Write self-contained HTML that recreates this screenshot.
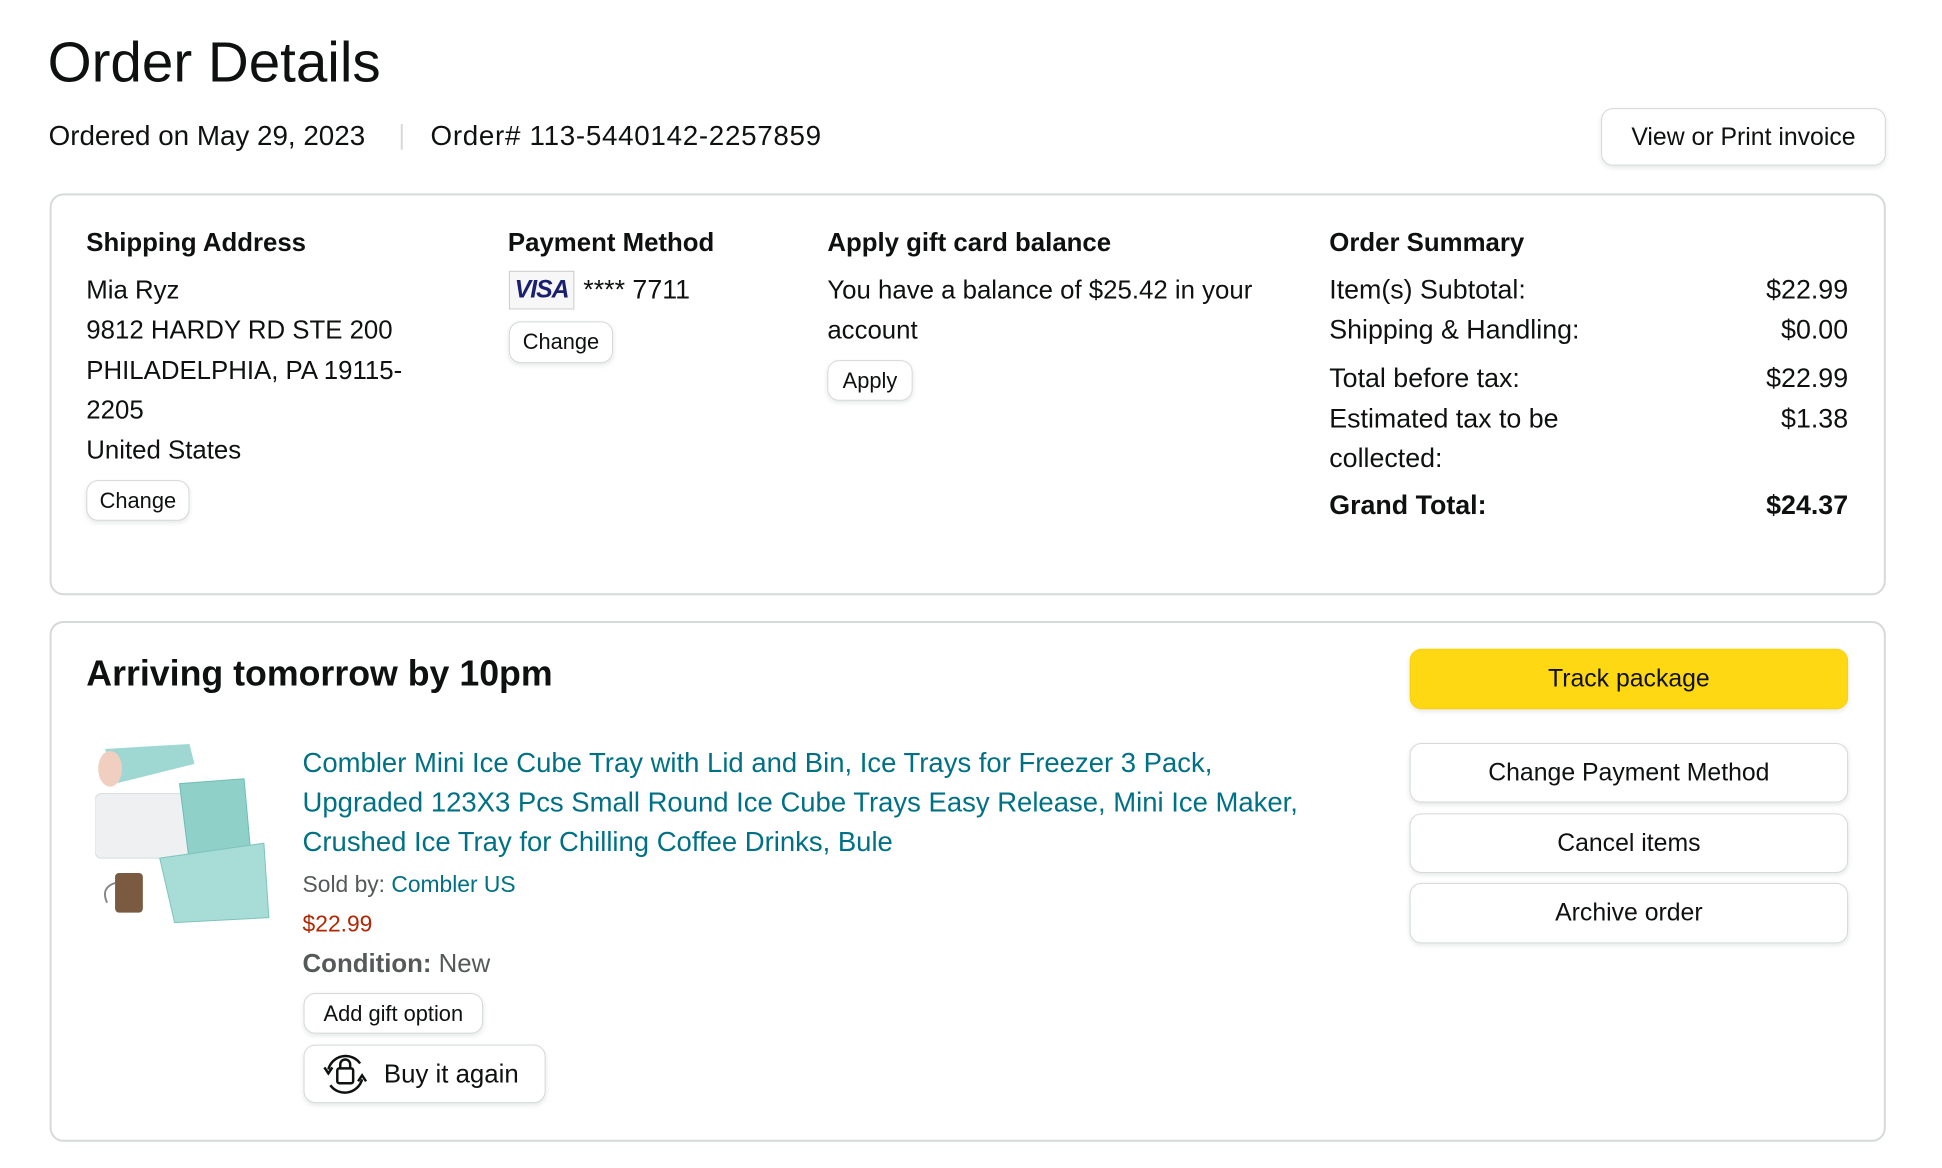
<!DOCTYPE html>
<html><head><meta charset="utf-8">
<style>
*{margin:0;padding:0;box-sizing:border-box}
body{width:1942px;height:1168px;background:#fff;font-family:"Liberation Sans",sans-serif;color:#0f1111;position:relative;overflow:hidden}
#w{position:absolute;left:0;top:0;width:1942px;height:1168px;transform:scale(0.992);transform-origin:0 0}
.a{position:absolute;white-space:nowrap}
.t{font-size:26px;line-height:40px}
.b{font-weight:bold}
.box{position:absolute;border:2px solid #d5d9d9;border-radius:14px}
.btn{position:absolute;border:1.5px solid #d5d9d9;border-radius:12px;background:#fff;box-shadow:0 2px 5px rgba(213,217,217,.6);display:flex;align-items:center;justify-content:center;font-size:22px;color:#0f1111}
.r{text-align:right;width:200px}
.link{color:#007185}
</style></head><body><div id="w">
<div class="a" style="left:48px;top:30px;font-size:57px;line-height:66px">Order Details</div>
<div class="a" style="left:49px;top:117px;font-size:28px;line-height:40px">Ordered on May 29, 2023</div>
<div class="a" style="left:404px;top:125px;width:2px;height:26px;background:#d5d9d9"></div>
<div class="a" style="left:434px;top:117px;font-size:28px;line-height:40px;letter-spacing:0.7px">Order# 113-5440142-2257859</div>
<div class="btn" style="left:1614px;top:109px;width:287px;height:58px;font-size:25px">View or Print invoice</div>

<div class="box" style="left:50px;top:195px;width:1851px;height:405px"></div>
<div class="a t b" style="left:87px;top:224px">Shipping Address</div>
<div class="a t" style="left:87px;top:272px">Mia Ryz</div>
<div class="a t" style="left:87px;top:312px">9812 HARDY RD STE 200</div>
<div class="a t" style="left:87px;top:353px">PHILADELPHIA, PA 19115-</div>
<div class="a t" style="left:87px;top:393px">2205</div>
<div class="a t" style="left:87px;top:433px">United States</div>
<div class="btn" style="left:87px;top:484px;width:104px;height:41px">Change</div>

<div class="a t b" style="left:512px;top:224px">Payment Method</div>
<div class="a" style="left:513px;top:273px;width:66px;height:39px;border:1px solid #ccc;background:#f7f7f7;font:italic bold 25px 'Liberation Sans',sans-serif;color:#1a1f71;text-align:center;line-height:37px;letter-spacing:-1px">VISA</div>
<div class="a t" style="left:588px;top:272px;font-size:27px">**** 7711</div>
<div class="btn" style="left:513px;top:324px;width:105px;height:42px">Change</div>

<div class="a t b" style="left:834px;top:224px">Apply gift card balance</div>
<div class="a t" style="left:834px;top:272px">You have a balance of $25.42 in your</div>
<div class="a t" style="left:834px;top:312px">account</div>
<div class="btn" style="left:834px;top:363px;width:86px;height:41px">Apply</div>

<div class="a t b" style="left:1340px;top:224px">Order Summary</div>
<div class="a t" style="left:1340px;top:272px;font-size:27px">Item(s) Subtotal:</div>
<div class="a t r" style="left:1663px;top:272px;font-size:27px">$22.99</div>
<div class="a t" style="left:1340px;top:312px;font-size:27px">Shipping &amp; Handling:</div>
<div class="a t r" style="left:1663px;top:312px;font-size:27px">$0.00</div>
<div class="a t" style="left:1340px;top:361px;font-size:27px">Total before tax:</div>
<div class="a t r" style="left:1663px;top:361px;font-size:27px">$22.99</div>
<div class="a t" style="left:1340px;top:402px;font-size:27px">Estimated tax to be</div>
<div class="a t r" style="left:1663px;top:402px;font-size:27px">$1.38</div>
<div class="a t" style="left:1340px;top:442px;font-size:27px">collected:</div>
<div class="a t b" style="left:1340px;top:489px;font-size:27px">Grand Total:</div>
<div class="a t b r" style="left:1663px;top:489px;font-size:27px">$24.37</div>

<div class="box" style="left:50px;top:626px;width:1851px;height:525px"></div>
<div class="a b" style="left:87px;top:657px;font-size:36px;line-height:44px">Arriving tomorrow by 10pm</div>
<div class="btn" style="left:1421px;top:654px;width:442px;height:61px;background:#ffd814;border-color:#fcd200;font-size:25px">Track package</div>
<div class="btn" style="left:1421px;top:749px;width:442px;height:60px;font-size:25px">Change Payment Method</div>
<div class="btn" style="left:1421px;top:820px;width:442px;height:60px;font-size:25px">Cancel items</div>
<div class="btn" style="left:1421px;top:890px;width:442px;height:61px;font-size:25px">Archive order</div>

<svg class="a" style="left:96px;top:745px" width="180" height="188" viewBox="0 0 180 188">
<rect x="0" y="55" width="95" height="65" rx="6" fill="#eef0f2" stroke="#d8dcdf"/>
<path d="M10 10 L95 5 L100 25 L20 45 Z" fill="#9fd8d2"/>
<ellipse cx="15" cy="30" rx="12" ry="18" fill="#f0cfc0"/>
<path d="M85 45 L150 40 L160 150 L100 165 Z" fill="#8fd0c9" stroke="#6dbdb5"/>
<path d="M65 120 L170 105 L175 180 L80 185 Z" fill="#a8dcd6" stroke="#7cc4bc"/>
<rect x="20" y="135" width="28" height="40" rx="4" fill="#7a5a40"/>
<path d="M20 145 Q5 150 12 165" stroke="#888" fill="none" stroke-width="2"/>
</svg>

<div class="a t link" style="left:305px;top:749px;font-size:27.7px">Combler Mini Ice Cube Tray with Lid and Bin, Ice Trays for Freezer 3 Pack,</div>
<div class="a t link" style="left:305px;top:789px;font-size:27.7px">Upgraded 123X3 Pcs Small Round Ice Cube Trays Easy Release, Mini Ice Maker,</div>
<div class="a t link" style="left:305px;top:829px;font-size:27.7px">Crushed Ice Tray for Chilling Coffee Drinks, Bule</div>
<div class="a" style="left:305px;top:876px;font-size:23px;line-height:30px;color:#565959">Sold by: <span class="link">Combler US</span></div>
<div class="a" style="left:305px;top:916px;font-size:23px;line-height:30px;color:#b12704">$22.99</div>
<div class="a t" style="left:305px;top:951px;color:#565959"><b>Condition:</b> New</div>
<div class="btn" style="left:306px;top:1001px;width:181px;height:41px">Add gift option</div>
<div class="btn" style="left:306px;top:1053px;width:244px;height:59px;font-size:26px;justify-content:flex-start;padding-left:16px">
<svg width="50" height="46" viewBox="0 0 50 46" style="margin-right:14px"><path d="M8 18 A18 18 0 0 1 40 12" fill="none" stroke="#0f1111" stroke-width="2.5"/><path d="M42 28 A18 18 0 0 1 10 34" fill="none" stroke="#0f1111" stroke-width="2.5"/><path d="M4 16 L8 22 L12 16" fill="none" stroke="#0f1111" stroke-width="2.5"/><path d="M38 30 L42 24 L46 30" fill="none" stroke="#0f1111" stroke-width="2.5"/><rect x="17" y="17" width="16" height="15" rx="2" fill="none" stroke="#0f1111" stroke-width="2.5"/><path d="M20 17 V13 A5 5 0 0 1 30 13 V17" fill="none" stroke="#0f1111" stroke-width="2.5"/></svg>Buy it again</div>
</div></body></html>
